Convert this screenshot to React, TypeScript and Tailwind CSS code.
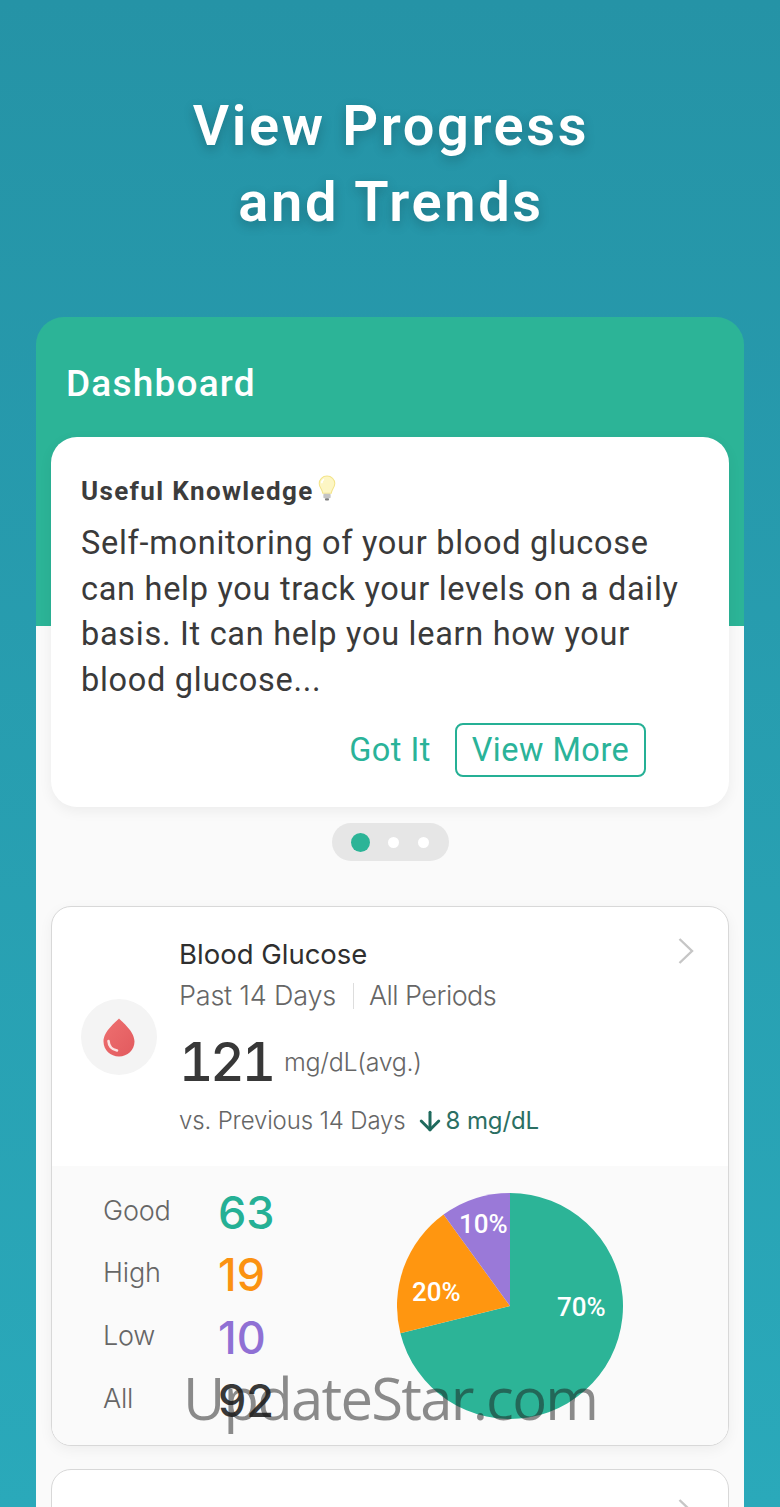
import React from "react";
import { ArrowDown } from "lucide-react";

function Bulb() {
  return (
    <svg width="20" height="27" viewBox="0 0 18 26" className="ml-[3px] -mt-[5px]">
      <path d="M9 1C4.6 1 1.5 4.3 1.5 8.2c0 3.4 2.6 5.2 3.4 9.3h8.2c.8-4.100 3.400-5.900 3.400-9.300C16.500 4.300 13.400 1 9 1z" fill="#fdf6c4" stroke="#f3e48a" strokeWidth="1" />
      <path d="M6 4c-1.500 1-2 2.500-2 4" fill="none" stroke="#ffffff" strokeWidth="1.500" />
      <rect x="5.500" y="18" width="7" height="4.500" rx="1" fill="#c4c4c4" />
      <rect x="7" y="22.500" width="4" height="2" rx="1" fill="#7f7f7f" />
    </svg>
  );
}

function Drop() {
  return (
    <svg width="32" height="40" viewBox="0 0 32 40">
      <defs>
        <linearGradient id="dropFill" x1="0" y1="0" x2="1" y2="1">
          <stop offset="0" stopColor="#ee7070" />
          <stop offset="1" stopColor="#e25a5e" />
        </linearGradient>
      </defs>
      <path d="M16 1.500C13 5 .5 14 .5 24.500 .5 33 7.500 39.500 16 39.500S31.500 33 31.500 24.500C31.500 14 19 5 16 1.500z" fill="url(#dropFill)" />
      <path d="M5.500 24c.3 5 3.500 8.500 8.500 9.500" fill="none" stroke="#fbe3e3" strokeWidth="2.600" strokeLinecap="round" />
    </svg>
  );
}

function Chevron() {
  return (
    <svg width="18" height="28" viewBox="0 0 18 28">
      <path d="M2.500 2 L15 14 L2.500 26" fill="none" stroke="#c6c6c6" strokeWidth="2.400" />
    </svg>
  );
}

function Pie() {
  const slice = (a0: number, a1: number) => {
    const r = 113;
    const p = (a: number) => {
      const t = (a * Math.PI) / 180;
      return `${113 + r * Math.sin(t)} ${113 - r * Math.cos(t)}`;
    };
    return `M113 113 L${p(a0)} A${r} ${r} 0 ${a1 - a0 > 180 ? 1 : 0} 1 ${p(a1)} Z`;
  };
  return (
    <svg width="226" height="226" viewBox="0 0 226 226" className="block">
      <path d={slice(0, 256)} fill="#2cb497" />
      <path d={slice(256, 324)} fill="#ff9610" />
      <path d={slice(324, 360)} fill="#9a79d8" />
    </svg>
  );
}

const rows = [
  { label: "Good", value: "63", color: "text-[#25b095]" },
  { label: "High", value: "19", color: "text-[#fb9211]" },
  { label: "Low", value: "10", color: "text-[#8f70d4]" },
  { label: "All", value: "92", color: "text-[#383838]" },
];

export default function App() {
  return (
    <div
      className="relative h-[1507px] w-[780px] overflow-hidden bg-[linear-gradient(180deg,#2593a6_0%,#2aa9ba_100%)] text-[#333333]"
      style={{ fontFamily: "Roboto, 'Noto Sans', sans-serif" }}
    >
      <h1 className="pt-[88px] pl-[2px] text-center text-[56px] leading-[76px] font-semibold tracking-[2.6px] text-white [text-shadow:0_4px_12px_rgba(0,0,0,0.22)]">
        View Progress
        <br />
        and Trends
      </h1>

      <div className="mx-9 mt-[77px] h-[1200px] rounded-t-[28px] bg-[linear-gradient(180deg,#2cb497_309px,#fafafa_309px)] px-[15px]">
        <div className="flex h-[120px] items-start pt-[42px] pl-[15px] text-[37px] leading-[50px] font-medium tracking-[1.2px] text-white">
          Dashboard
        </div>

        <div className="h-[370px] rounded-[26px] bg-white px-[30px] pt-[37px] shadow-[0_4px_14px_rgba(0,0,0,0.06)]">
          <div className="flex h-[34px] items-center text-[26px] leading-[34px] font-bold tracking-[1.35px] text-[#3c3c3c]">
            Useful Knowledge
            <Bulb />
          </div>
          <p className="mt-[13px] text-[32.5px] leading-[45.500px] tracking-[0.71px] text-[#3a3a3a]">
            Self-monitoring of your blood glucose
            <br />
            can help you track your levels on a daily
            <br />
            basis. It can help you learn how your
            <br />
            blood glucose...
          </p>
          <div className="mt-[20px] flex items-center justify-end gap-[24px] pr-[53px] text-[32.500px] tracking-[0.5px] text-[#2ab399]">
            <span>Got It</span>
            <span className="flex h-[54px] w-[191px] items-center justify-center rounded-[8px] border-2 border-[#25b095]">
              View More
            </span>
          </div>
        </div>

        <div className="mt-[16px] flex justify-center">
          <div className="flex h-[38px] w-[117px] items-center rounded-full bg-[#e6e6e6] pl-[19px]">
            <span className="h-[19px] w-[19px] rounded-full bg-[#2cb497]" />
            <span className="ml-[18px] h-[11px] w-[11px] rounded-full bg-white" />
            <span className="ml-[19px] h-[11px] w-[11px] rounded-full bg-white" />
          </div>
        </div>

        <div
          className="mt-[45px] h-[540px] overflow-hidden rounded-[20px] border border-[#d8d8d8] bg-white shadow-[0_4px_14px_rgba(0,0,0,0.05)]"
          style={{ fontFamily: "Inter, Roboto, sans-serif" }}
        >
          <div className="flex h-[259px] pl-[29px]">
            <div className="mt-[92px] flex h-[76px] w-[76px] shrink-0 items-center justify-center rounded-full bg-[#f4f4f4]">
              <Drop />
            </div>
            <div className="ml-[22px] flex-1 pt-[28px]">
              <div className="text-[27.500px] leading-[38px] text-[#2f2f2f]">Blood Glucose</div>
              <div className="mt-[5px] flex items-center text-[27px] leading-[36px] font-light tracking-[-0.2px] text-[#666666]">
                Past 14 Days
                <span className="mr-[15px] ml-[17px] h-[26px] w-px bg-[#dddddd]" />
                <span className="tracking-[-0.55px]">All Periods</span>
              </div>
              <div className="mt-[17px] flex h-[62px] items-center">
                <span className="text-[53px] leading-[62px] font-medium tracking-[-3px] text-[#383838] tabular-nums">121</span>
                <span className="mt-[2px] ml-[11px] text-[25px] font-light tracking-[-0.3px] text-[#666666]">mg/dL(avg.)</span>
              </div>
              <div className="mt-[10px] flex items-center text-[24px] leading-[36px] font-light tracking-[-0.15px] text-[#666666]">
                vs. Previous 14 Days
                <ArrowDown className="ml-[9px] h-[30px] w-[30px] text-[#1f6a5d]" strokeWidth={2.4} />
                <span className="ml-[1px] font-normal tracking-[-0.1px] text-[#2b6f63]">8 mg/dL</span>
              </div>
            </div>
            <div className="pt-[30px] pr-[33px]">
              <Chevron />
            </div>
          </div>
          <div className="flex h-[280px] bg-[#fafafa] pl-[51px]">
            <div className="w-[294px] pt-[15px]">
              {rows.map((r) => (
                <div key={r.label} className="flex h-[62.700px] items-center">
                  <span className="mb-[3px] w-[115px] text-[27px] font-light tracking-[-0.2px] text-[#666666]">{r.label}</span>
                  <span className={`text-[45px] font-medium ${r.color}`}>{r.value}</span>
                </div>
              ))}
            </div>
            <div
              className="relative mt-[27px] h-[226px] w-[226px] text-[26px] font-medium text-white"
              style={{ fontFamily: "Roboto, sans-serif" }}
            >
              <Pie />
              <span className="absolute top-[12px] left-[62px]">10%</span>
              <span className="absolute top-[80px] left-[15px]">20%</span>
              <span className="absolute top-[95px] left-[160px]">70%</span>
            </div>
          </div>
        </div>

        <div
          className="mt-[23px] h-[200px] rounded-[20px] border border-[#d8d8d8] bg-white"
          style={{ fontFamily: "Inter, Roboto, sans-serif" }}
        >
          <div className="flex justify-between pt-[28px] pr-[33px] pl-[127px]">
            <span className="text-[27.500px] leading-[38px] text-[#2f2f2f]">Blood Pressure</span>
            <Chevron />
          </div>
        </div>
      </div>

      <div
        className="absolute top-[1358px] left-[183px] text-[58px] leading-[80px] tracking-[-1.75px] whitespace-nowrap text-[#1a1a1a]/50"
        style={{ fontFamily: "'Open Sans', sans-serif" }}
      >
        UpdateStar.com
      </div>
    </div>
  );
}
